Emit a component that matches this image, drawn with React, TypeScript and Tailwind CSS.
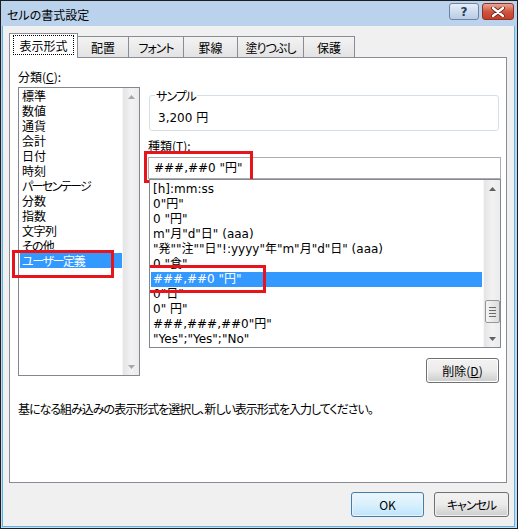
import React from 'react';

const leftItems: [string, string][] = [
  ['標準', ''],
  ['数値', ''],
  ['通貨', ''],
  ['会計', ''],
  ['日付', ''],
  ['時刻', ''],
  ['パーセンテージ', 'tracking-[-1.6px]'],
  ['分数', ''],
  ['指数', ''],
  ['文字列', 'tracking-[-0.5px]'],
  ['その他', 'tracking-[-0.8px]'],
  ['ユーザー定義', 'tracking-[-1.4px]'],
];
const rightItems = [
  '[h]:mm:ss',
  '0"円"',
  '0 "円"',
  'm"月"d"日" (aaa)',
  '"発""注""日"!:yyyy"年"m"月"d"日" (aaa)',
  '0 "食"',
  '###,##0 "円"',
  '0"日"',
  '0" 円"',
  '###,###,##0"円"',
  '"Yes";"Yes";"No"',
];

const latin = "font-['DejaVu_Sans','Noto_Sans_CJK_JP',sans-serif]";

function Arrow({ up, dark }: { up?: boolean; dark?: boolean }) {
  return (
    <div className="h-[17px] flex items-center justify-center">
      <svg width="7" height="4" viewBox="0 0 7 4">
        <path d={up ? 'M0 4 L3.5 0 L7 4 Z' : 'M0 0 L7 0 L3.5 4 Z'} fill={dark ? '#606060' : '#a8a8a8'} />
      </svg>
    </div>
  );
}

function Track({ children }: { children: React.ReactNode }) {
  return (
    <div className="w-[17px] h-full flex flex-col bg-gradient-to-r from-[#e4e4e4] via-[#f2f2f2] to-[#ebebeb] border-l border-[#f7f7f7]">
      {children}
    </div>
  );
}

function Button({ children, w, def }: { children: React.ReactNode; w: string; def?: boolean }) {
  return (
    <div className={`${w} h-[25px] rounded-[3px] border ${def ? 'border-[#3c7fb1]' : 'border-[#707070]'} p-px`}>
      <div
        className={`h-full w-full rounded-[2px] flex items-center justify-center ${
          def
            ? 'bg-gradient-to-b from-[#eaf6fd] via-[#d9f0fc] to-[#bee6fd]'
            : 'bg-gradient-to-b from-[#f2f2f2] via-[#ebebeb] to-[#cfcfcf]'
        }`}
      >
        {children}
      </div>
    </div>
  );
}

export default function App() {
  return (
    <div className="w-[518px] h-[529px] border border-[#1e1e1e] flex flex-col bg-gradient-to-b from-[#bad2ec] to-[#c7dbf0] font-['Noto_Sans_CJK_JP',sans-serif] [font-feature-settings:'palt'] text-[12px] text-black leading-[15px]">
      {/* title bar */}
      <div className="h-[25px] flex items-center pl-[6px] pr-[3px] shrink-0">
        <div className="flex-1 text-[12px] text-black mt-[1px]">セルの書式設定</div>
        <div className="flex gap-[3px] -mt-[4px]">
          <div className="w-[30px] h-[17px] rounded-[3px] border border-[#6c85a6] bg-gradient-to-b from-[#e6eef8] via-[#cfdced] to-[#b8cde6] flex items-center justify-center">
            <span className="text-[12px] leading-[12px] font-bold text-[#2a3d58] font-['DejaVu_Sans',sans-serif]">?</span>
          </div>
          <div className="w-[32px] h-[17px] rounded-[3px] border border-[#8b3426] bg-gradient-to-b from-[#e9a596] via-[#d0563f] to-[#c73b25] flex items-center justify-center">
            <svg width="14" height="10" viewBox="0 0 14 10">
              <path d="M2 1 L12 9 M12 1 L2 9" stroke="#5a1e14" strokeWidth="4" strokeLinecap="round" />
              <path d="M2 1 L12 9 M12 1 L2 9" stroke="#ffffff" strokeWidth="2.4" strokeLinecap="round" />
            </svg>
          </div>
        </div>
      </div>

      {/* client */}
      <div className="flex-1 ml-[1px] mr-[2px] mb-[1px] border-x border-b border-[#5cb4e4] bg-[#f0f0f0] pl-[6px] pt-[7px] flex flex-col">
        {/* tabs */}
        <div className="flex items-end h-[24px]">
          <div className="relative z-10 w-[69px] h-[25px] -mb-px bg-white border-t border-x border-[#898c95] flex items-center justify-center pb-[2px]">
            <div className="border border-dotted border-black w-[61px] h-[20px] flex items-center justify-center">表示形式</div>
          </div>
          {[
            ['配置', 'w-[52px]', ''],
            ['フォント', 'w-[56px]', 'tracking-[-1px]'],
            ['罫線', 'w-[55px]', ''],
            ['塗りつぶし', 'w-[67px]', 'tracking-[-1px]'],
            ['保護', 'w-[52px]', ''],
          ].map(([t, w, tr]) => (
            <div
              key={t}
              className={`${w} -ml-px h-[21px] border-t border-x border-[#898c95] bg-gradient-to-b from-[#f3f3f3] to-[#e3e3e3] flex items-center justify-center`}
            >
              <span className={tr}>{t}</span>
            </div>
          ))}
        </div>

        {/* panel */}
        <div className="w-[498px] h-[426px] border border-[#898c95] bg-white flex flex-col">
          <div className="flex items-start pl-[8px] gap-[8px]">
            {/* left column */}
            <div className="w-[122px] pt-[11px] flex flex-col">
              <div className="h-[15px]">
                分類(<span className="underline">C</span>):
              </div>
              <div className="relative mt-[3px] h-[289px] border border-[#828790] bg-white flex">
                <div className="w-[102px] ml-px flex flex-col">
                  {leftItems.map(([t, tr], i) => (
                    <div
                      key={t}
                      className={`h-[15px] pl-[2px] whitespace-nowrap ${tr} ${
                        i === leftItems.length - 1 ? 'bg-[#3399ff] text-white' : ''
                      }`}
                    >
                      {t}
                    </div>
                  ))}
                </div>
                <Track>
                  <Arrow up />
                  <div className="flex-1" />
                  <Arrow />
                </Track>
                <div className="absolute left-[-7px] top-[162px] w-[102px] h-[28px] border-[3px] border-[#e8141c]" />
              </div>
            </div>

            {/* right column */}
            <div className="w-[353px] pt-[30px] flex flex-col">
              <fieldset className="ml-px w-[350px] h-[43px] border border-[#d5dfe5] rounded-[3px] p-0 m-0">
                <legend className="ml-[5px] px-px leading-[15px] tracking-[-1px]">サンプル</legend>
                <div className={`pl-[8px] mt-[8px] h-[15px] ${latin}`}>3,200 円</div>
              </fieldset>
              <div className="mt-[7px] h-[15px]">種類(T):</div>
              <div
                className={`relative mt-[4px] h-[22px] border border-[#abadb3] bg-white flex items-center pl-[5px] whitespace-pre ${latin}`}
              >
                ###,##0 "円"
                <div className="absolute left-[-5px] top-[-7px] w-[109px] h-[32px] border-[3px] border-[#e8141c]" />
              </div>
              <div className="relative ml-px h-[169px] border border-[#828790] bg-white flex overflow-hidden">
                <div className={`w-[333px] px-px pt-[2px] flex flex-col ${latin}`}>
                  {rightItems.map((t, i) => (
                    <div
                      key={t}
                      className={`h-[15px] shrink-0 pl-[2px] whitespace-pre ${i === 6 ? 'bg-[#3399ff] text-white' : ''}`}
                    >
                      {t}
                    </div>
                  ))}
                </div>
                <Track>
                  <Arrow up dark />
                  <div className="flex-1" />
                  <div className="mx-px w-[15px] h-[23px] rounded-[2px] border border-[#979797] bg-gradient-to-r from-[#f4f4f4] to-[#dcdcdc] flex flex-col items-center justify-center gap-[2px]">
                    <div className="w-[7px] h-px bg-[#6b6b6b]" />
                    <div className="w-[7px] h-px bg-[#6b6b6b]" />
                    <div className="w-[7px] h-px bg-[#6b6b6b]" />
                    <div className="w-[7px] h-px bg-[#6b6b6b]" />
                  </div>
                  <div className="h-[7px]" />
                  <Arrow dark />
                </Track>
                <div className="absolute left-[-7px] top-[85px] w-[123px] h-[28px] border-[3px] border-[#e8141c]" />
              </div>
              <div className="self-end mr-[2px] mt-[10px]">
                <Button w="w-[73px]">
                  削除(<span className="underline">D</span>)
                </Button>
              </div>
            </div>
          </div>
          <div className="mt-[18px] pl-[8px] h-[15px] whitespace-nowrap tracking-[-1px]">
            基になる組み込みの表示形式を選択し、新しい表示形式を入力してください。
          </div>
        </div>

        {/* bottom buttons */}
        <div className="mt-[9px] flex justify-end gap-[10px] pr-[5px]">
          <Button w="w-[73px]" def>
            OK
          </Button>
          <Button w="w-[75px]">
            <span className="tracking-[-1px]">キャンセル</span>
          </Button>
        </div>
      </div>
    </div>
  );
}
